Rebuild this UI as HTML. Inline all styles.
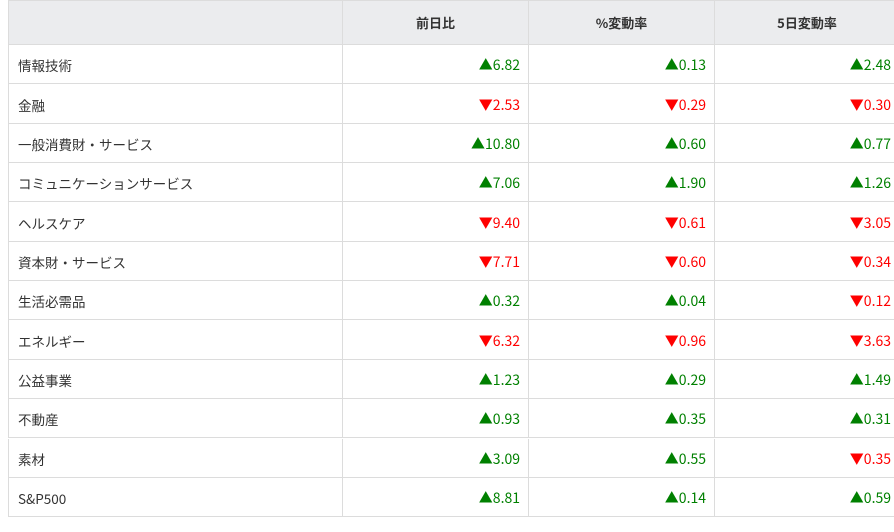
<!DOCTYPE html>
<html><head><meta charset="utf-8"><style>
html,body{margin:0;padding:0;width:894px;height:532px;overflow:hidden;background:#fff;}
body{font-family:"Liberation Sans","Noto Sans CJK JP",sans-serif;font-size:14px;color:#333;position:relative;}
.r{position:absolute;left:8px;width:900px;border-bottom:1px solid #dcdcdc;}
.c{position:absolute;top:0;bottom:0;display:flex;align-items:center;box-sizing:border-box;border-left:1px solid #dcdcdc;padding-top:2px;}
.c0{left:0;width:334px;padding-left:9px;}
.c1{left:334px;width:186px;justify-content:flex-end;padding-right:8px;}
.c2{left:520px;width:186px;justify-content:flex-end;padding-right:8px;}
.c3{left:706px;width:186px;justify-content:flex-end;padding-right:8px;border-right:1px solid #dcdcdc;}
.h{background:#ebecee;font-weight:bold;font-family:"Noto Sans CJK JP",sans-serif;font-size:13px;}
.h .c{justify-content:center;padding:0;}
.u{color:#008000;font-family:"Noto Sans CJK JP",sans-serif;}
.d{color:#ff0000;font-family:"Noto Sans CJK JP",sans-serif;}
.n{font-family:"Noto Sans CJK JP",sans-serif;font-size:13.5px;}
</style></head><body>
<div class="r h" style="top:0;height:45px;border-top:1px solid #dcdcdc;box-sizing:border-box;">
<div class="c c0"></div><div class="c c1">前日比</div><div class="c c2">%変動率</div><div class="c c3">5日変動率</div></div>
<div id="rows"></div>
<script>
var d=[["情報技術","▲6.82","▲0.13","▲2.48"],["金融","▼2.53","▼0.29","▼0.30"],["一般消費財・サービス","▲10.80","▲0.60","▲0.77"],["コミュニケーションサービス","▲7.06","▲1.90","▲1.26"],["ヘルスケア","▼9.40","▼0.61","▼3.05"],["資本財・サービス","▼7.71","▼0.60","▼0.34"],["生活必需品","▲0.32","▲0.04","▼0.12"],["エネルギー","▼6.32","▼0.96","▼3.63"],["公益事業","▲1.23","▲0.29","▲1.49"],["不動産","▲0.93","▲0.35","▲0.31"],["素材","▲3.09","▲0.55","▼0.35"],["S&P500","▲8.81","▲0.14","▲0.59"]];
var h="";
for(var i=0;i<d.length;i++){var t=45+i*39.35;
h+='<div class="r" style="top:'+t.toFixed(2)+'px;height:38.35px;"><div class="c c0 n">'+d[i][0].replace("&","&amp;")+'</div>';
for(var j=1;j<4;j++){var v=d[i][j];h+='<div class="c c'+j+' '+(v[0]=="▲"?"u":"d")+'">'+v+'</div>';}
h+='</div>';}
document.getElementById("rows").innerHTML=h;
</script>
</body></html>
